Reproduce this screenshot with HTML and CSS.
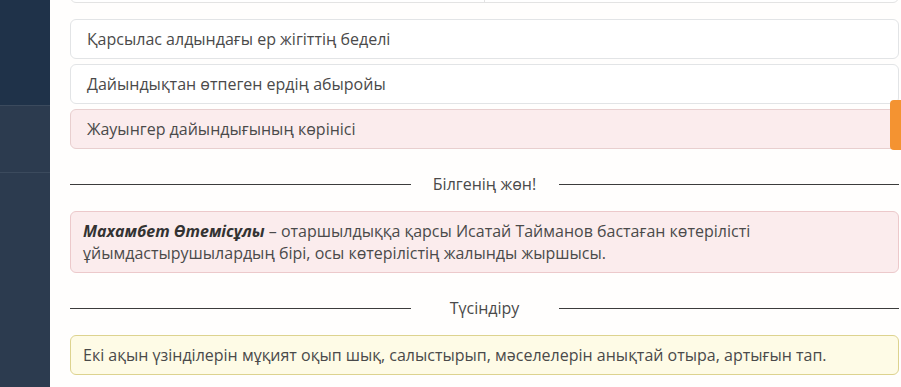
FILE: index.html
```html
<!DOCTYPE html>
<html lang="kk">
<head>
    <meta charset="UTF-8">
    <meta name="viewport" content="width=device-width, initial-scale=1.0">
    <title>Сәйкестендіру</title>
    <link rel="stylesheet" href="styles.css">
</head>
<body>
    <div class="sidebar">
        <div class="side-top"></div>
        <div class="side-item"></div>
        <div class="side-rest"></div>
    </div>
    <div class="main">
        <div class="pair-row">
            <div class="pair-cell"></div>
            <div class="pair-cell"></div>
        </div>
        <div class="options">
            <div class="option">Қарсылас алдындағы ер жігіттің беделі</div>
            <div class="option">Дайындықтан өтпеген ердің абыройы</div>
            <div class="option wrong">Жауынгер дайындығының көрінісі</div>
        </div>
        <div class="divider">
            <span class="line"></span>
            <span class="divider-text">Білгенің жөн!</span>
            <span class="line"></span>
        </div>
        <div class="note pink">
            <b><i>Махамбет Өтемісұлы</i></b> – отаршылдыққа қарсы Исатай Тайманов бастаған көтерілісті<br>
            ұйымдастырушылардың бірі, осы көтерілістің жалынды жыршысы.
        </div>
        <div class="divider">
            <span class="line"></span>
            <span class="divider-text">Түсіндіру</span>
            <span class="line"></span>
        </div>
        <div class="note yellow">Екі ақын үзінділерін мұқият оқып шық, салыстырып, мәселелерін анықтай отыра, артығын тап.</div>
    </div>
    <div class="side-tab"></div>
</body>
</html>
```

FILE: styles.css
```css
body {
    margin: 0;
    padding: 0;
    display: flex;
    height: 100vh;
    overflow: hidden;
    font-family: 'Open Sans', sans-serif;
    font-size: 16px;
    color: #4a4a4a;
    background-color: #fffefd;}
.sidebar {
    width: 50px;
    flex-shrink: 0;
    display: flex;
    flex-direction: column;
    background-color: #2c3b4f;}
.side-top {
    height: 105px;
    background-color: #1f3249;
    border-bottom: 1px solid #3b4a5d;}
.side-item {
    height: 66px;
    border-bottom: 1px solid #3b4a5d;}
.side-rest {
    flex: 1;}
.main {
    flex: 1;
    padding: 0 2px 0 20px;}
.pair-row {
    display: flex;
    height: 40px;
    margin-top: -37px;
    border: 1px solid #e3e3e3;
    border-radius: 6px;
    background-color: #fff;
    box-sizing: border-box;}
.pair-cell {
    flex: 1;}
.pair-cell + .pair-cell {
    border-left: 1px solid #e3e3e3;}
.options {
    display: flex;
    flex-direction: column;
    gap: 5px;
    margin-top: 16px;}
.option {
    height: 40px;
    box-sizing: border-box;
    display: flex;
    align-items: center;
    padding: 0 16px;
    border: 1px solid #e2e4e6;
    border-radius: 6px;
    background-color: #fff;}
.option.wrong {
    background-color: #fbeced;
    border-color: #e8cfcf;}
.divider {
    display: flex;
    align-items: center;
    height: 24px;
    margin: 23px 0 15px;}
.line {
    flex: 1;
    height: 1px;
    background-color: #3c3c3c;}
.divider-text {
    width: 148px;
    text-align: center;
    line-height: 24px;}
.note {
    border: 1px solid;
    border-radius: 6px;
    padding: 8px 12px;
    line-height: 22px;}
.note b {
    color: #333;}
.note.pink {
    background-color: #fbeced;
    border-color: #ecc9cb;}
.note.yellow {
    background-color: #fefbe6;
    border-color: #ddd38f;
    height: 40px;
    box-sizing: border-box;
    display: flex;
    align-items: center;
    padding: 0 12px;}
.side-tab {
    position: fixed;
    right: 0;
    top: 100px;
    width: 11px;
    height: 50px;
    background-color: #f49331;
    border-radius: 4px 0 0 4px;}
```
